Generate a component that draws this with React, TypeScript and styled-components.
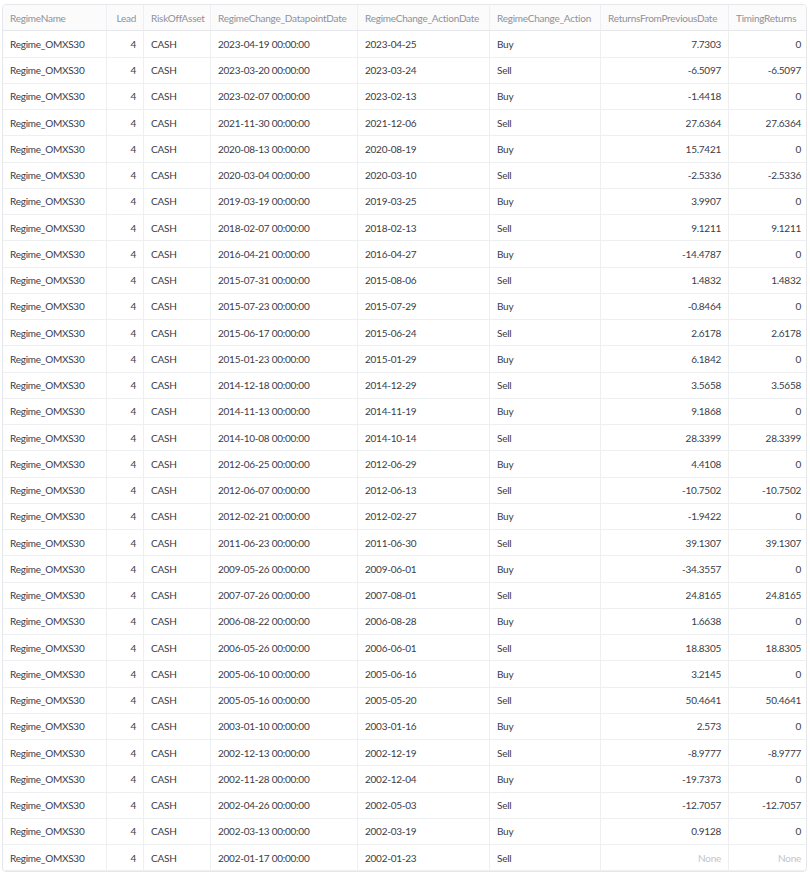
import React from "react";
import styled, { createGlobalStyle } from "styled-components";

const Global = createGlobalStyle`
  html, body { margin: 0; padding: 0; background: #ffffff; }
  body { font-family: Lato, "Open Sans", sans-serif; }
`;

const Page = styled.div`
  padding: 4px 3px 0 2px;
`;

const Grid = styled.div`
  display: grid;
  grid-template-columns: 104px 37px 67px 147px 132px 111px 128px 79px;
  grid-auto-rows: 26.25px;
  width: 805px;
  border: 1px solid #e6e7ea;
  border-radius: 4px;
  overflow: hidden;
  box-sizing: border-box;
  font-size: 10px;
  letter-spacing: -0.25px;
  color: #31333f;
`;

const Cell = styled.div<{ $right?: boolean; $muted?: boolean; $last?: boolean }>`
  display: flex;
  align-items: center;
  justify-content: ${(p) => (p.$right ? "flex-end" : "flex-start")};
  padding: 0 7px 0 7px;
  border-right: ${(p) => (p.$last ? "none" : "1px solid #eeeff1")};
  border-bottom: 1px solid #eeeff1;
  color: ${(p) => (p.$muted ? "#c3c4c8" : "#3a3c47")};
  white-space: nowrap;
  overflow: hidden;
`;

const HeadCell = styled(Cell)`
  color: #8f9198;
  background: #fbfbfc;
  border-bottom-color: #e6e7ea;
`;

const headers = [
  "RegimeName",
  "Lead",
  "RiskOffAsset",
  "RegimeChange_DatapointDate",
  "RegimeChange_ActionDate",
  "RegimeChange_Action",
  "ReturnsFromPreviousDate",
  "TimingReturns",
];

type Row = [string, string, string, string | null, string | null];

const rows: Row[] = [
  ["2023-04-19", "2023-04-25", "Buy", "7.7303", "0"],
  ["2023-03-20", "2023-03-24", "Sell", "-6.5097", "-6.5097"],
  ["2023-02-07", "2023-02-13", "Buy", "-1.4418", "0"],
  ["2021-11-30", "2021-12-06", "Sell", "27.6364", "27.6364"],
  ["2020-08-13", "2020-08-19", "Buy", "15.7421", "0"],
  ["2020-03-04", "2020-03-10", "Sell", "-2.5336", "-2.5336"],
  ["2019-03-19", "2019-03-25", "Buy", "3.9907", "0"],
  ["2018-02-07", "2018-02-13", "Sell", "9.1211", "9.1211"],
  ["2016-04-21", "2016-04-27", "Buy", "-14.4787", "0"],
  ["2015-07-31", "2015-08-06", "Sell", "1.4832", "1.4832"],
  ["2015-07-23", "2015-07-29", "Buy", "-0.8464", "0"],
  ["2015-06-17", "2015-06-24", "Sell", "2.6178", "2.6178"],
  ["2015-01-23", "2015-01-29", "Buy", "6.1842", "0"],
  ["2014-12-18", "2014-12-29", "Sell", "3.5658", "3.5658"],
  ["2014-11-13", "2014-11-19", "Buy", "9.1868", "0"],
  ["2014-10-08", "2014-10-14", "Sell", "28.3399", "28.3399"],
  ["2012-06-25", "2012-06-29", "Buy", "4.4108", "0"],
  ["2012-06-07", "2012-06-13", "Sell", "-10.7502", "-10.7502"],
  ["2012-02-21", "2012-02-27", "Buy", "-1.9422", "0"],
  ["2011-06-23", "2011-06-30", "Sell", "39.1307", "39.1307"],
  ["2009-05-26", "2009-06-01", "Buy", "-34.3557", "0"],
  ["2007-07-26", "2007-08-01", "Sell", "24.8165", "24.8165"],
  ["2006-08-22", "2006-08-28", "Buy", "1.6638", "0"],
  ["2006-05-26", "2006-06-01", "Sell", "18.8305", "18.8305"],
  ["2005-06-10", "2005-06-16", "Buy", "3.2145", "0"],
  ["2005-05-16", "2005-05-20", "Sell", "50.4641", "50.4641"],
  ["2003-01-10", "2003-01-16", "Buy", "2.573", "0"],
  ["2002-12-13", "2002-12-19", "Sell", "-8.9777", "-8.9777"],
  ["2002-11-28", "2002-12-04", "Buy", "-19.7373", "0"],
  ["2002-04-26", "2002-05-03", "Sell", "-12.7057", "-12.7057"],
  ["2002-03-13", "2002-03-19", "Buy", "0.9128", "0"],
  ["2002-01-17", "2002-01-23", "Sell", null, null],
];

export default function App() {
  return (
    <Page>
      <Global />
      <Grid>
        {headers.map((h, i) => (
          <HeadCell key={h} $right={i === 1} $last={i === headers.length - 1}>
            {h}
          </HeadCell>
        ))}
        {rows.map((r, idx) => (
          <React.Fragment key={idx}>
            <Cell>Regime_OMXS30</Cell>
            <Cell $right>4</Cell>
            <Cell>CASH</Cell>
            <Cell>{r[0]} 00:00:00</Cell>
            <Cell>{r[1]}</Cell>
            <Cell>{r[2]}</Cell>
            <Cell $right $muted={r[3] === null}>
              {r[3] ?? "None"}
            </Cell>
            <Cell $right $muted={r[4] === null} $last>
              {r[4] ?? "None"}
            </Cell>
          </React.Fragment>
        ))}
      </Grid>
    </Page>
  );
}
